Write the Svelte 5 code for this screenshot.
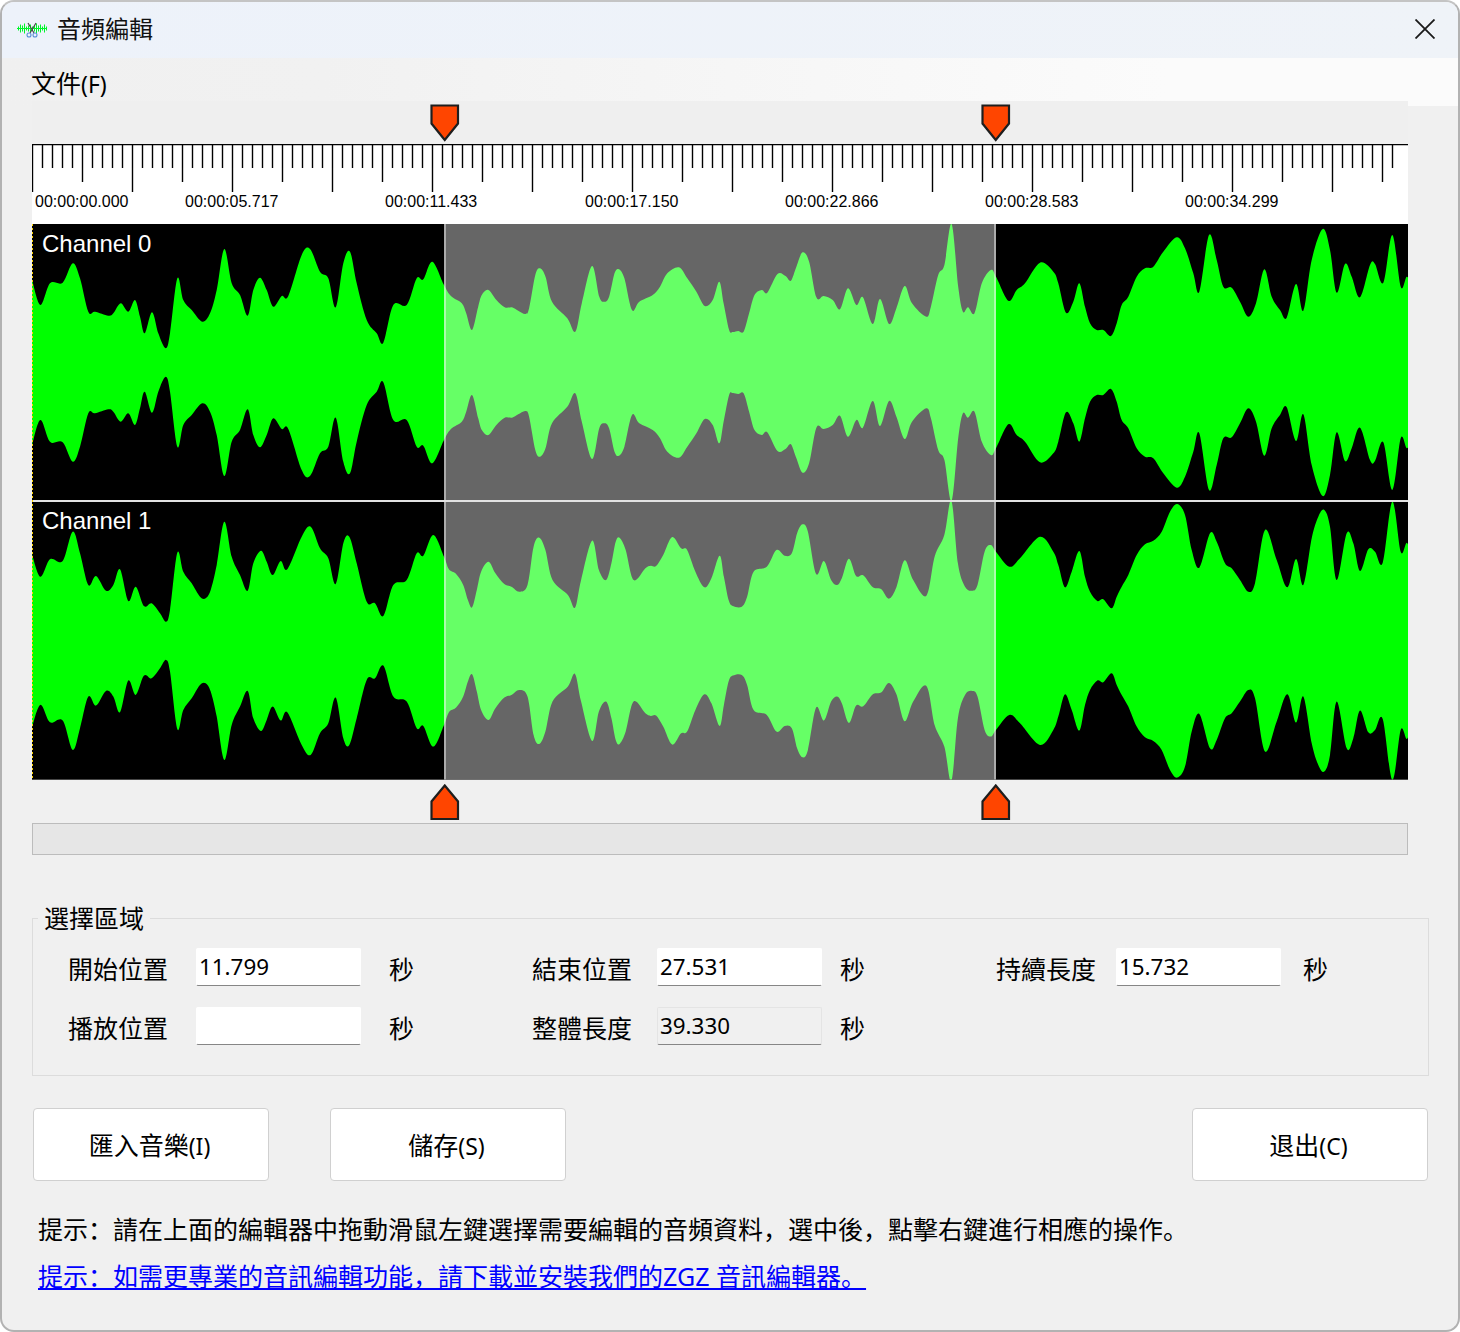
<script>
  const tr = (d, x0, sx, y0) => d.map(([x, y]) => [x0 + x / sx, y0 + y / 3]);
  const ch0 = [
    ...tr([[95,175],[121,255],[150,190],[188,188],[218,130],[240,175],[265,275],[285,275],[325,287],[340,280],[362,250],[385,275],[405,240],[420,290],[434,340],[456,277],[475,340],[497,385],[510,340],[532,175],[550,240],[575,270],[607,305],[630,280],[650,210],[673,87],[695,190],[720,225],[743,287],[760,210],[780,173],[800,210],[820,260],[845,228],[865,228],[905,105],[930,87],[960,155],[985,175],[1007,262],[1030,130],[1050,95],[1070,190],[1100,300],[1130,340],[1150,368],[1180,255],[1220,255],[1250,175],[1270,178],[1297,125],[1332,195]], 0, 3, 220),
    ...tr([[30,228],[60,250],[72,280],[88,330],[105,260],[115,225],[133,210],[155,240],[178,262],[198,262],[215,272],[235,282],[245,265],[262,165],[275,145],[290,170],[308,245],[350,295],[372,335],[390,250],[418,138],[438,230],[452,245],[465,230],[480,160],[492,148],[507,175],[528,270],[548,245],[585,225],[605,200],[625,160],[657,142],[680,175],[705,215],[728,258],[750,240],[768,185],[780,250],[795,330],[805,336],[820,333],[835,335],[850,280],[865,225],[885,210],[900,218],[928,162],[950,168],[965,182],[980,140],[997,97],[1015,125],[1035,232],[1055,228],[1080,240],[1100,268],[1122,205],[1145,255],[1163,232],[1190,312],[1210,237],[1235,312],[1255,265],[1278,198],[1298,250],[1337,290],[1350,260],[1370,165],[1387,135],[1407,12],[1425,200],[1438,275],[1452,262],[1470,280],[1490,190],[1515,150]], 440, 2.75, 220),
    ...tr([[18,170],[55,242],[80,210],[105,190],[150,128],[190,155],[205,190],[228,278],[250,245],[268,190],[285,260],[300,310],[320,330],[340,330],[363,348],[380,310],[395,255],[415,230],[440,170],[465,145],[490,140],[520,95],[560,52],[585,85],[610,160],[628,215],[657,45],[680,120],[700,200],[725,203],[750,245],[775,290],[798,250],[823,148],[845,230],[870,270],[890,293],[918,192],[940,272],[965,120],[998,27],[1020,90],[1040,218],[1065,132],[1085,170],[1110,232],[1140,135],[1155,132],[1180,188],[1207,45],[1232,200],[1250,170],[1262,190]], 990, 3, 220)
  ];
  const ch1 = [
    ...tr([[95,160],[121,230],[150,178],[188,183],[218,95],[240,160],[265,255],[288,228],[318,272],[340,255],[360,208],[385,303],[407,260],[432,318],[455,310],[480,340],[498,365],[510,330],[532,158],[550,215],[575,250],[600,290],[617,295],[632,270],[650,195],[673,65],[695,170],[720,225],[743,272],[760,190],[783,152],[800,185],[818,225],[842,183],[862,208],[905,110],[932,80],[960,145],[985,175],[1007,252],[1030,130],[1048,110],[1070,190],[1100,305],[1125,310],[1150,348],[1180,255],[1220,240],[1250,160],[1270,167],[1300,105],[1332,170]], 0, 3, 500),
    ...tr([[25,208],[45,222],[65,255],[78,300],[90,322],[103,270],[115,215],[136,185],[155,220],[180,252],[200,260],[222,275],[245,255],[262,140],[278,113],[295,150],[315,240],[358,285],[378,323],[395,240],[426,122],[445,210],[465,240],[480,190],[492,125],[503,113],[520,150],[542,240],[575,205],[590,197],[605,198],[625,165],[650,111],[675,145],[692,150],[715,215],[740,262],[760,235],[783,167],[795,230],[808,300],[820,318],[845,320],[860,290],[878,215],[915,200],[942,150],[965,167],[985,160],[1000,100],[1015,73],[1030,95],[1053,222],[1075,183],[1095,240],[1112,255],[1125,235],[1145,176],[1165,228],[1185,226],[1212,262],[1235,267],[1257,296],[1278,262],[1301,181],[1325,240],[1362,287],[1385,170],[1412,105],[1432,2],[1450,190],[1470,260],[1490,272],[1505,255],[1525,155],[1542,135]], 440, 2.8, 500),
    ...tr([[18,155],[58,200],[90,175],[150,110],[190,155],[205,195],[225,262],[245,215],[268,153],[285,230],[300,275],[322,303],[340,298],[365,325],[380,290],[395,260],[415,225],[440,165],[465,133],[490,122],[515,95],[540,35],[562,12],[585,45],[605,150],[628,203],[660,100],[680,125],[705,190],[725,205],[750,240],[775,275],[795,250],[825,90],[860,180],[892,262],[918,177],[940,255],[965,115],[985,50],[1003,30],[1020,80],[1040,240],[1070,100],[1090,130],[1110,213],[1135,148],[1155,155],[1178,188],[1207,5],[1232,155],[1250,128],[1262,160]], 990, 3, 500)
  ];

  function smooth(pts, first) {
    let d = first ? `M${pts[0][0].toFixed(1)} ${pts[0][1].toFixed(1)}` : `L${pts[0][0].toFixed(1)} ${pts[0][1].toFixed(1)}`;
    for (let i = 0; i < pts.length - 1; i++) {
      const p0 = pts[Math.max(i - 1, 0)], p1 = pts[i], p2 = pts[i + 1], p3 = pts[Math.min(i + 2, pts.length - 1)];
      const c1x = p1[0] + (p2[0] - p0[0]) / 6, c1y = p1[1] + (p2[1] - p0[1]) / 6;
      const c2x = p2[0] - (p3[0] - p1[0]) / 6, c2y = p2[1] - (p3[1] - p1[1]) / 6;
      d += `C${c1x.toFixed(1)} ${c1y.toFixed(1)} ${c2x.toFixed(1)} ${c2y.toFixed(1)} ${p2[0].toFixed(1)} ${p2[1].toFixed(1)}`;
    }
    return d;
  }
  function envelope(pts, c) {
    const low = pts.map(([x, y]) => [x, 2 * c - y]).reverse();
    return smooth(pts, true) + smooth(low, false) + 'Z';
  }
  const channels = [
    { name: 'Channel 0', path: envelope(ch0, 362.5), labelY: 252 },
    { name: 'Channel 1', path: envelope(ch1, 640.8), labelY: 529 }
  ];

  const ticks = Array.from({ length: 137 }, (_, i) => ({
    x: 32.5 + i * 10,
    h: i % 10 === 0 ? 48 : i % 5 === 0 ? 38 : 24
  }));
  const times = [
    [35, '00:00:00.000'], [185, '00:00:05.717'], [385, '00:00:11.433'], [585, '00:00:17.150'],
    [785, '00:00:22.866'], [985, '00:00:28.583'], [1185, '00:00:34.299']
  ];
  const sel = [444, 995];
  const spikes = [
    [1, 2], [3, 4], [5, 3], [7, 5], [9, 2], [11, 3], [13, 4], [15, 2], [17, 3], [19, 5], [21, 3], [23, 4], [25, 2], [27, 4], [29, 2]
  ];
  const hint = '提示\uFF1A請在上面的編輯器中拖動滑鼠左鍵選擇需要編輯的音頻資料\uFF0C選中後\uFF0C點擊右鍵進行相應的操作。';
  const link = '提示\uFF1A如需更專業的音訊編輯功能\uFF0C請下載並安裝我們的ZGZ 音訊編輯器。';
</script>

<div class="win">
  <header class="title">
    <svg class="logo" viewBox="0 0 30 18" width="30" height="18" aria-hidden="true">
      <path class="logo-line" d="M0 7.5H30" />
      {#each spikes as [x, h]}
        <path class="logo-wave" d="M{x + 0.5} {7.5 - h}V{7.5 + h}" />
      {/each}
      <path class="logo-cut" d="M11 2L17 12M19 2L13 12" />
      <circle class="logo-ring" cx="12" cy="14" r="2" />
      <circle class="logo-ring" cx="18" cy="14" r="2" />
    </svg>
    <span class="title-text">音頻編輯</span>
    <svg class="close" viewBox="0 0 20 20" width="20" height="20" aria-hidden="true">
      <path d="M0.5 0.5L19.5 19.5M19.5 0.5L0.5 19.5" />
    </svg>
  </header>

  <nav class="menu"><span>文件<span class="lat">(F)</span></span></nav>

  <section class="editor">
    <div class="strip top">
      {#each sel as x}
        <svg class="marker" style="left:{x - 32 - 14}px" viewBox="0 0 30 38" width="30" height="38" aria-hidden="true">
          <path d="M1.5 1.5H28V19.5L14.75 36L1.5 19.5Z" />
        </svg>
      {/each}
    </div>

    <svg class="ruler" viewBox="32 144 1376 80" width="1376" height="80">
      <rect x="32" y="144" width="1376" height="80" fill="#fff" />
      <path class="tick" d="M32 144.5H1408" />
      {#each ticks as t}
        <path class="tick" d="M{t.x} 144V{144 + t.h}" />
      {/each}
      {#each times as [x, label]}
        <text class="time" x={x} y="206.5">{label}</text>
      {/each}
    </svg>

    <svg class="wave" viewBox="32 224 1376 556" width="1376" height="556">
      <rect x="32" y="224" width="1376" height="556" fill="#000" />
      {#each channels as c}
        <path d={c.path} fill="#00ff00" />
      {/each}
      <rect x={sel[0]} y="224" width={sel[1] - sel[0] + 1} height="556" fill="#fff" fill-opacity="0.4" />
      <rect x={sel[0]} y="224" width="2" height="556" fill="#fff" fill-opacity="0.45" />
      <rect x={sel[1] - 1} y="224" width="2" height="556" fill="#fff" fill-opacity="0.45" />
      <rect x="32" y="500" width="1376" height="2" fill="#e2e2e2" />
      <rect x="32" y="779" width="1376" height="1" fill="#777" fill-opacity="0.6" />
      <path class="playhead" d="M32.5 224V780" />
      {#each channels as c}
        <text class="chan" x="42" y={c.labelY}>{c.name}</text>
      {/each}
    </svg>

    <div class="strip bottom">
      {#each sel as x}
        <svg class="marker" style="left:{x - 32 - 14}px" viewBox="0 0 30 37" width="30" height="37" aria-hidden="true">
          <path d="M14.75 1.5L28 17.5V35H1.5V17.5Z" />
        </svg>
      {/each}
    </div>

    <div class="progress"></div>
  </section>

  <fieldset class="group">
    <legend>選擇區域</legend>
    <div class="grid">
      <label class="lab" for="f1">開始位置</label>
      <input id="f1" value="11.799" />
      <span class="unit u1">秒</span>
      <label class="lab" for="f2">結束位置</label>
      <input id="f2" value="27.531" />
      <span class="unit u2">秒</span>
      <label class="lab" for="f3">持續長度</label>
      <input id="f3" value="15.732" />
      <span class="unit u3">秒</span>

      <label class="lab" for="f4">播放位置</label>
      <input id="f4" value="" />
      <span class="unit u1">秒</span>
      <label class="lab" for="f5">整體長度</label>
      <input id="f5" class="ro" value="39.330" readonly />
      <span class="unit u2">秒</span>
    </div>
  </fieldset>

  <div class="actions">
    <button type="button">匯入音樂<span class="lat">(I)</span></button>
    <button type="button">儲存<span class="lat">(S)</span></button>
    <button type="button" class="exit">退出<span class="lat">(C)</span></button>
  </div>

  <div class="hints">
    <p>{hint}</p>
    <p><a href="#top">{link}</a></p>
  </div>
</div>

<style>
  :global(body) {
    margin: 0;
    background: #fff;
  }
  .win {
    box-sizing: border-box;
    width: 1460px;
    height: 1332px;
    border: 2px solid #b2b2b2;
    border-top-color: #c4c4c4;
    border-radius: 14px;
    overflow: hidden;
    background: #f0f0f0;
    font-family: "Noto Sans", "Noto Sans CJK SC", sans-serif;
    font-size: 25px;
    color: #000;
  }
  .lat {
    font-size: 23px;
  }
  .title {
    box-sizing: border-box;
    height: 56px;
    display: flex;
    align-items: center;
    background: linear-gradient(90deg, #edf2fa, #eff3f8);
    padding: 0 23px 2px 15px;
  }
  .logo {
    flex: none;
    margin-top: 2px;
  }
  .logo-line {
    stroke: #00ff2a;
    stroke-width: 1;
    fill: none;
  }
  .logo-wave {
    stroke: #00f52a;
    stroke-width: 1;
    fill: none;
  }
  .logo-cut {
    stroke: #4a4a4a;
    stroke-width: 1.2;
    fill: none;
  }
  .logo-ring {
    stroke: #5b8fd6;
    stroke-width: 1.1;
    fill: none;
  }
  .title-text {
    margin: 0 0 4px 10px;
    font-size: 24px;
    color: #111;
  }
  .close {
    margin-left: auto;
  }
  .close path {
    stroke: #1a1a1a;
    stroke-width: 1.8;
    fill: none;
  }
  .menu {
    height: 48px;
    padding-left: 29px;
    line-height: 50px;
    background: linear-gradient(90deg, #f0f0f0 0, #f1f1f1 22%, #f6f6f6 50%, #fbfbfb 80%, #fbfbfb 100%);
  }
  .menu > span {
    display: inline-block;
  }
  .editor {
    position: relative;
    margin: -5px 0 0 30px;
    width: 1376px;
    background: #efefef;
  }
  .strip {
    position: relative;
  }
  .strip.top {
    height: 43px;
  }
  .strip.bottom {
    height: 43px;
    background: #f0f0f0;
  }
  .marker {
    position: absolute;
    display: block;
  }
  .top .marker {
    top: 3px;
  }
  .bottom .marker {
    top: 4px;
  }
  .marker path {
    fill: #ff4500;
    stroke: #1e1e1e;
    stroke-width: 2.2;
  }
  .ruler,
  .wave {
    display: block;
  }
  .tick {
    stroke: #000;
    stroke-width: 1.4;
    fill: none;
  }
  .time {
    font-family: "Liberation Sans", sans-serif;
    font-size: 16px;
    fill: #000;
  }
  .chan {
    font-family: "Liberation Sans", sans-serif;
    font-size: 24px;
    fill: #fff;
  }
  .playhead {
    stroke: #ffd400;
    stroke-width: 1;
    stroke-dasharray: 2 2;
    fill: none;
  }
  .progress {
    box-sizing: border-box;
    height: 32px;
    background: #e6e6e6;
    border: 1px solid #bcbcbc;
  }
  .group {
    box-sizing: border-box;
    width: 1397px;
    margin: 46px 0 0 30px;
    padding: 13px 0 30px 35px;
    border: 1px solid #dcdcdc;
    min-width: 0;
  }
  .group legend {
    margin-left: -30px;
    padding: 0 6px;
    line-height: 34px;
  }
  .grid {
    display: grid;
    grid-template-columns: 128px 165px 171px 125px 165px 174px 120px 165px auto;
    grid-auto-rows: 38px;
    row-gap: 21px;
  }
  .lab,
  .unit {
    line-height: 43px;
    height: 38px;
    white-space: nowrap;
  }
  .u1 {
    padding-left: 28px;
  }
  .u2 {
    padding-left: 18px;
  }
  .u3 {
    padding-left: 22px;
  }
  input {
    box-sizing: border-box;
    width: 165px;
    height: 38px;
    padding: 0 0 1px 2px;
    margin: 0;
    border: 1px solid #fff;
    border-bottom: 1px solid #868686;
    border-radius: 2px;
    background: #fff;
    font-family: "Noto Sans", sans-serif;
    font-size: 22.4px;
    color: #000;
    outline: none;
  }
  input.ro {
    background: #f0f0f0;
    border-color: #e4e4e4;
    border-bottom-color: #868686;
  }
  .actions {
    display: flex;
    gap: 61px;
    margin: 32px 30px 0 31px;
  }
  button {
    box-sizing: border-box;
    width: 236px;
    height: 73px;
    background: #fff;
    border: 1px solid #d0d0d0;
    border-radius: 4px;
    font: inherit;
    color: #000;
    padding: 0 3px 2px 0;
  }
  .exit {
    margin-left: auto;
  }
  .hints {
    margin: 25px 0 0 36px;
  }
  .hints p {
    margin: 0;
    line-height: 47px;
    white-space: nowrap;
  }
  .hints a {
    color: #0000ff;
    text-decoration: underline;
  }
</style>
